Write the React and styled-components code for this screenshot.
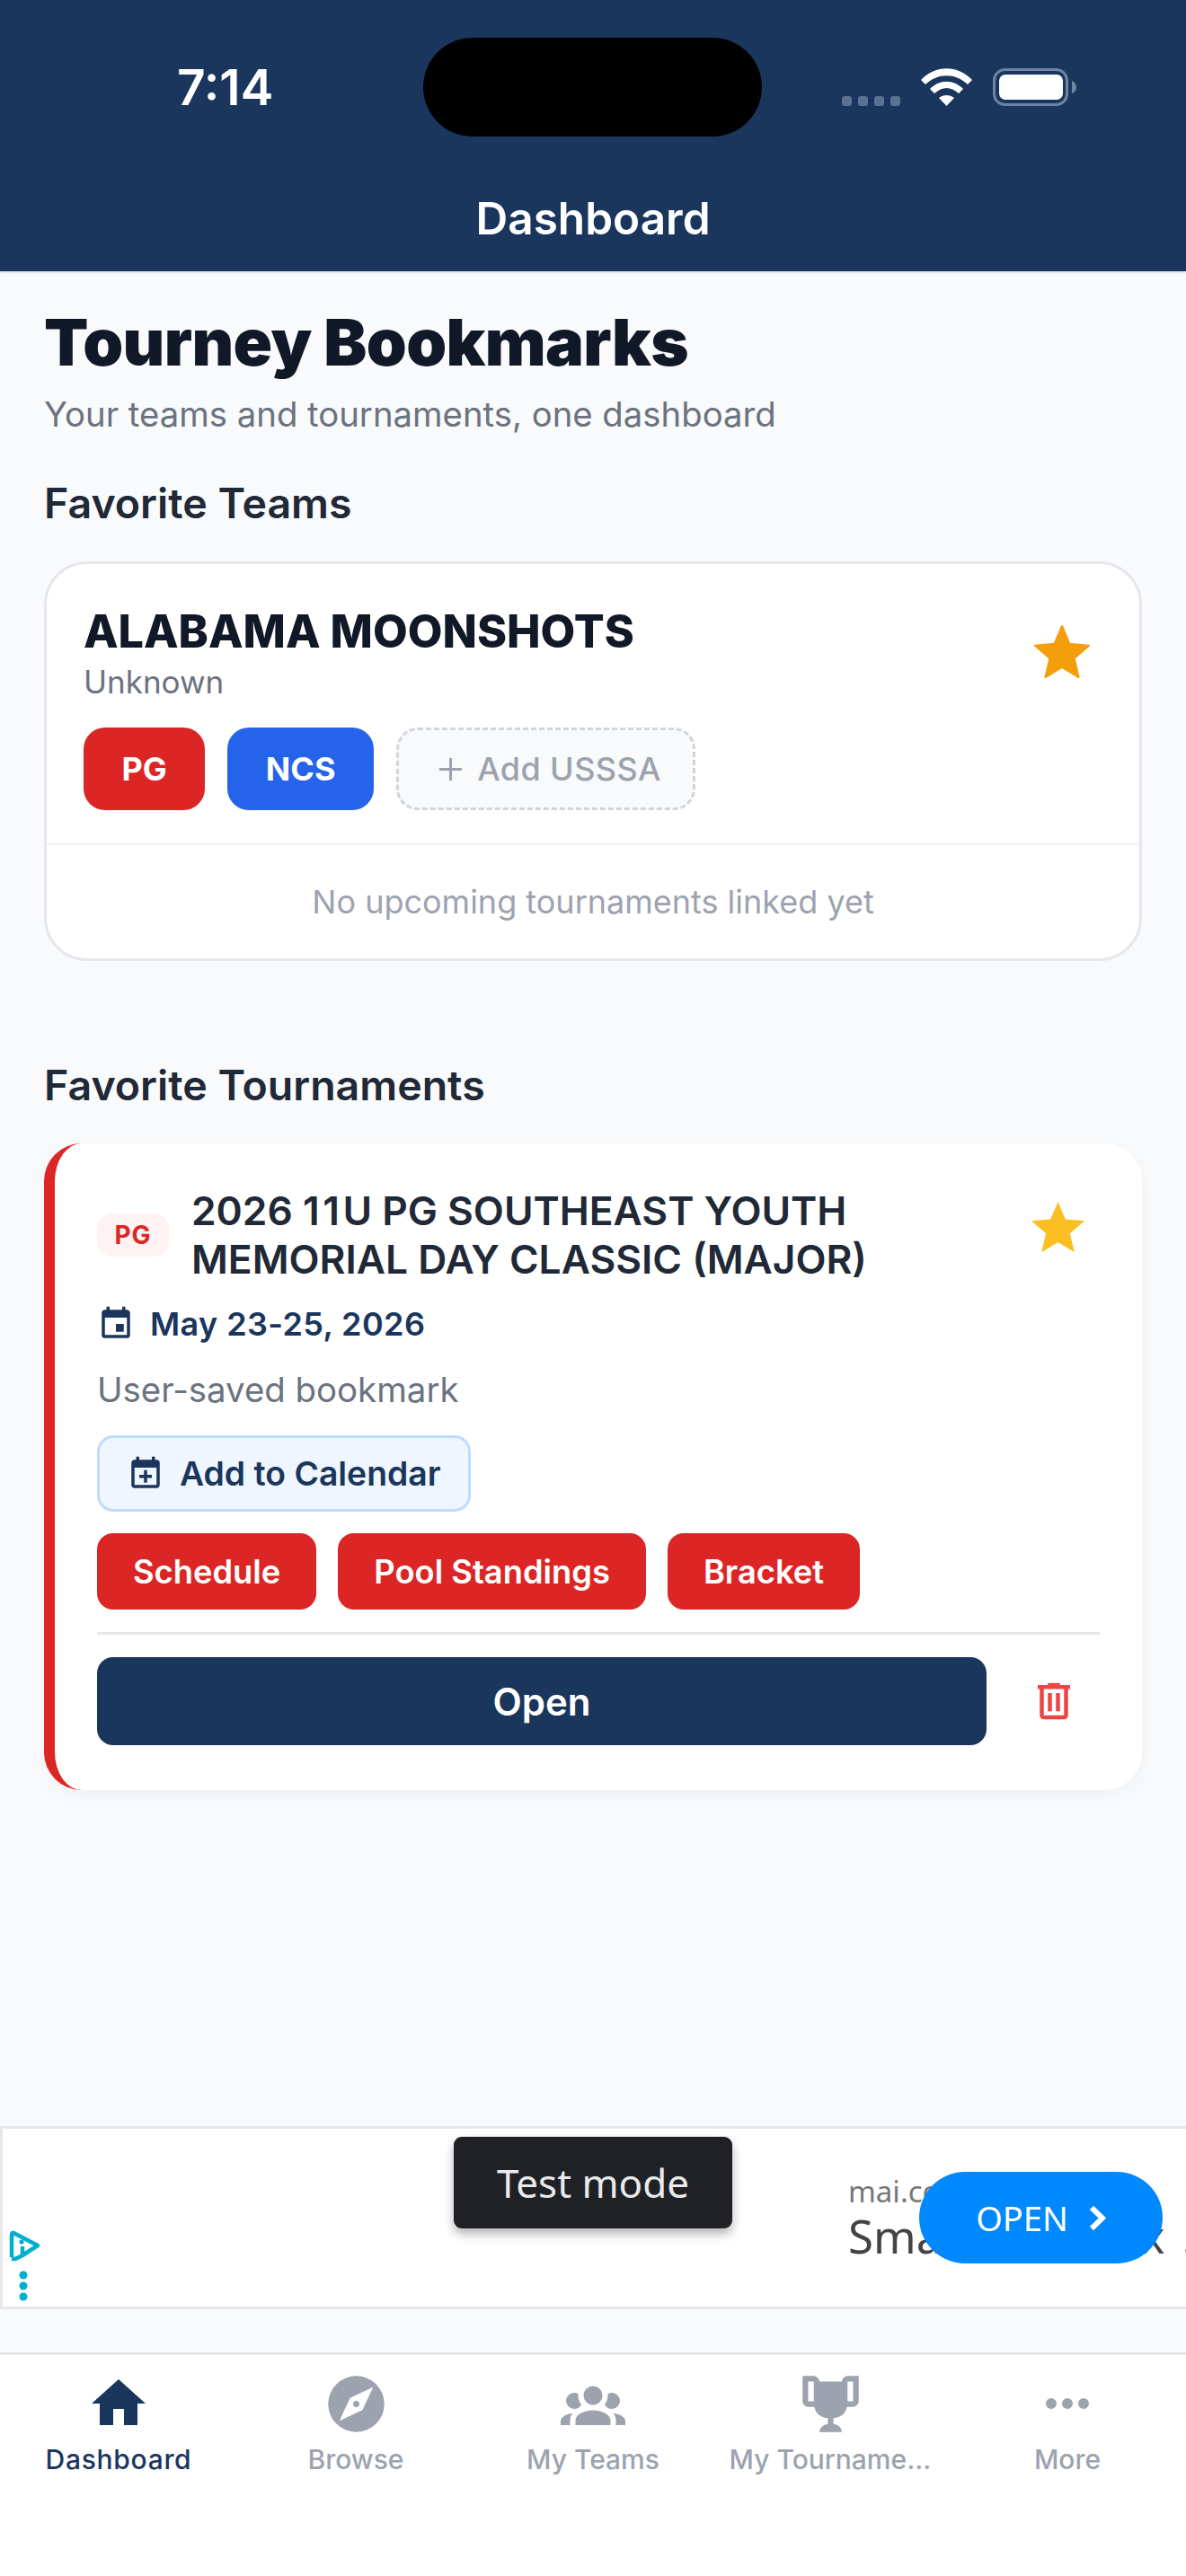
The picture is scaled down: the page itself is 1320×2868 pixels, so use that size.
import React from 'react';
import styled, { createGlobalStyle } from 'styled-components';

const GlobalStyle = createGlobalStyle`
  html, body { margin: 0; padding: 0; background: #f9fafb; }
  * { box-sizing: border-box; }
  body { font-family: 'Inter', 'Liberation Sans', sans-serif; }
`;

const Screen = styled.div`
  width: 1320px;
  height: 2868px;
  display: flex;
  flex-direction: column;
  background: #f9fafb;
  overflow: hidden;
`;

const Header = styled.header`
  height: 302px;
  flex: none;
  background: #1a365d;
  box-shadow: 0 1px 3px rgba(0, 0, 0, 0.2);
  display: flex;
  flex-direction: column;
  align-items: center;
  color: #fff;
`;

const StatusBar = styled.div`
  width: 100%;
  height: 110px;
  margin-top: 42px;
  display: flex;
  align-items: center;
`;

const Clock = styled.div`
  width: 471px;
  padding-left: 197px;
  font-size: 55px;
  font-weight: 600;
`;

const Island = styled.div`
  width: 377px;
  height: 110px;
  border-radius: 55px;
  background: #000;
`;

const StatusIcons = styled.div`
  margin-left: 89px;
  height: 42px;
  display: flex;
  align-items: flex-end;
  gap: 23px;
`;

const HeaderTitle = styled.div`
  margin-top: 61px;
  font-size: 49.5px;
  line-height: 60px;
  font-weight: 600;
`;

const Main = styled.main`
  flex: 1;
  padding: 35px 49px 0;
`;

const PageTitle = styled.h1`
  margin: 0;
  font-size: 72px;
  line-height: 88px;
  font-weight: 900;
  letter-spacing: -0.6px;
  color: #111827;
`;

const Subtitle = styled.p`
  margin: 9px 0 0;
  font-size: 38.3px;
  line-height: 54px;
  color: #6b7280;
`;

const SectionTitle = styled.h2`
  margin: ${(p) => p.$top}px 0 0;
  font-size: 46.5px;
  line-height: 60px;
  font-weight: 600;
  color: #1f2937;
`;

const TeamCard = styled.section`
  margin-top: 35px;
  height: 445px;
  background: #fff;
  border: 3px solid #e5e7eb;
  border-radius: 48px;
`;

const TeamTop = styled.div`
  height: 313px;
  padding: 45px 50px 0 41px;
  display: flex;
  justify-content: space-between;
  border-bottom: 3px solid #f3f4f6;
`;

const TeamName = styled.div`
  font-size: 50.2px;
  line-height: 60px;
  font-weight: 800;
  color: #111827;
`;

const TeamSub = styled.div`
  margin-top: 5px;
  font-size: 35px;
  line-height: 42px;
  color: #6b7280;
`;

const ChipRow = styled.div`
  margin-top: 30px;
  display: flex;
  gap: 25px;
`;

const Chip = styled.div`
  height: 92px;
  padding: 0 42.5px;
  border-radius: 24px;
  background: ${(p) => p.$bg};
  color: #fff;
  font-size: 36px;
  font-weight: 700;
  display: flex;
  align-items: center;
`;

const AddChip = styled.div`
  height: 92px;
  width: 333px;
  padding-left: 10px;
  border-radius: 24px;
  border: 3px dashed #d1d5db;
  background: #f9fafb;
  color: #9ca3af;
  font-size: 36px;
  font-weight: 500;
  letter-spacing: 0.4px;
  display: flex;
  align-items: center;
  justify-content: center;
  gap: 17px;
`;

const TeamStar = styled.div`
  color: #f59e0b;
  margin-top: 18px;
  display: flex;
`;

const EmptyNote = styled.div`
  height: 126px;
  display: flex;
  align-items: center;
  justify-content: center;
  font-size: 36px;
  color: #9ca3af;
`;

const TournamentCard = styled.section`
  margin-top: 35px;
  height: 720px;
  background: #fff;
  border-left: 12px solid #dc2626;
  border-radius: 42px;
  box-shadow: 0 6px 24px rgba(0, 0, 0, 0.04);
  padding: 48px 47px 0 47px;
`;

const TitleRow = styled.div`
  display: flex;
  align-items: center;
`;

const SourceTag = styled.div`
  width: 80px;
  height: 48px;
  border-radius: 18px;
  background: #fef2f2;
  color: #dc2626;
  font-size: 28px;
  font-weight: 700;
  letter-spacing: 1px;
  display: flex;
  align-items: center;
  justify-content: center;
  flex: none;
`;

const TournamentTitle = styled.div`
  margin-left: 25px;
  flex: 1;
  font-size: 44.3px;
  line-height: 54px;
  font-weight: 600;
  color: #1f2937;
`;

// the 1s sit wider in the reference's digits
const WideDigits = styled.span`
  letter-spacing: 3.5px;
`;

const TournamentStar = styled.div`
  color: #fbbf24;
  display: flex;
  margin: -16px 11px 0 0;
`;

const DateRow = styled.div`
  margin-top: 23px;
  display: flex;
  align-items: center;
  gap: 17px;
  font-size: 36px;
  font-weight: 600;
  letter-spacing: 0.4px;
  color: #1a365d;
`;

const Note = styled.div`
  margin-top: 28px;
  font-size: 38.4px;
  line-height: 46px;
  color: #6b7280;
`;

const CalendarButton = styled.div`
  margin-top: 28px;
  width: 416px;
  height: 85px;
  border: 3px solid #bfdbfe;
  border-radius: 18px;
  background: #eff6ff;
  color: #1a365d;
  font-size: 37.3px;
  font-weight: 600;
  display: flex;
  align-items: center;
  padding-left: 30px;
  gap: 17px;
`;

const LinkRow = styled.div`
  margin-top: 24px;
  display: flex;
  gap: 24px;
`;

const LinkButton = styled.div`
  height: 85px;
  padding: 0 40px;
  border-radius: 18px;
  background: #dc2626;
  color: #fff;
  font-size: 36.3px;
  font-weight: 600;
  display: flex;
  align-items: center;
`;

const ActionRow = styled.div`
  margin-top: 25px;
  padding-top: 25px;
  border-top: 3px solid #e5e7eb;
  display: flex;
  align-items: center;
  justify-content: space-between;
`;

const OpenButton = styled.div`
  width: 990px;
  height: 98px;
  border-radius: 18px;
  background: #1a365d;
  color: #fff;
  font-size: 42px;
  font-weight: 600;
  display: flex;
  align-items: center;
  justify-content: center;
`;

const TrashButton = styled.div`
  color: #ef4444;
  display: flex;
  margin-right: 24px;
`;

const AdBanner = styled.aside`
  height: 204px;
  flex: none;
  border: 3px solid #e5e7eb;
  border-right: none;
  background: #fff;
  position: relative;
  overflow: hidden;
  font-family: 'Noto Sans', sans-serif;
`;

const AdIcon = styled.div`
  position: absolute;
  left: 5px;
  top: 113px;
  display: flex;
`;

const ToastBadge = styled.div`
  position: absolute;
  left: 502px;
  top: 9px;
  width: 310px;
  height: 102px;
  border-radius: 9px;
  background: #202124;
  box-shadow: 0 6px 12px rgba(0, 0, 0, 0.3);
  color: #e8eaed;
  font-size: 44px;
  display: flex;
  align-items: center;
  justify-content: center;
`;

const AdDomain = styled.div`
  position: absolute;
  left: 941px;
  top: 47px;
  font-size: 33px;
  color: #777;
`;

const AdHeadline = styled.div`
  position: absolute;
  left: 941px;
  top: 84px;
  font-size: 51px;
  word-spacing: 6px;
  color: #444;
  white-space: nowrap;
`;

const AdOpen = styled.div`
  position: absolute;
  left: 1020px;
  top: 48px;
  width: 271px;
  height: 102px;
  border-radius: 51px;
  background: #0088ff;
  color: #fff;
  font-size: 38px;
  display: flex;
  align-items: center;
  justify-content: center;
  gap: 24px;
`;

const Spacer = styled.div`
  height: 48px;
  flex: none;
`;

const TabBar = styled.nav`
  height: 249px;
  flex: none;
  background: #fff;
  border-top: 3px solid #e5e7eb;
  display: flex;
  padding-top: 18px;
`;

const Tab = styled.div`
  flex: 1;
  min-width: 0;
  display: flex;
  flex-direction: column;
  align-items: center;
  color: ${(p) => (p.$active ? '#1a365d' : '#9ca3af')};
`;

const TabIcon = styled.div`
  height: 72px;
  display: flex;
  align-items: center;
  justify-content: center;
`;

const TabLabel = styled.div`
  margin-top: 6px;
  font-size: 30px;
  line-height: 40px;
  font-weight: 500;
  letter-spacing: ${(p) => (p.$active ? '0.7px' : '0')};
  white-space: nowrap;
`;

// material community icon paths, same set the app uses
const icons = {
  home: 'M10,20V14H14V20H19V12H22L12,3L2,12H5V20H10Z',
  compass: 'M14.19,14.19L6,18L9.81,9.81L18,6M12,2A10,10 0 0,0 2,12A10,10 0 0,0 12,22A10,10 0 0,0 22,12A10,10 0 0,0 12,2M12,10.9A1.1,1.1 0 0,0 10.9,12A1.1,1.1 0 0,0 12,13.1A1.1,1.1 0 0,0 13.1,12A1.1,1.1 0 0,0 12,10.9Z',
  group: 'M12,5.5A3.5,3.5 0 0,1 15.5,9A3.5,3.5 0 0,1 12,12.5A3.5,3.5 0 0,1 8.5,9A3.5,3.5 0 0,1 12,5.5M5,8C5.56,8 6.08,8.15 6.53,8.42C6.38,9.85 6.8,11.27 7.66,12.38C7.16,13.34 6.16,14 5,14A3,3 0 0,1 2,11A3,3 0 0,1 5,8M19,8A3,3 0 0,1 22,11A3,3 0 0,1 19,14C17.84,14 16.84,13.34 16.34,12.38C17.2,11.27 17.62,9.85 17.47,8.42C17.92,8.15 18.44,8 19,8M5.5,18.25C5.5,16.18 8.41,14.5 12,14.5C15.59,14.5 18.5,16.18 18.5,18.25V20H5.5V18.25M0,20V18.5C0,17.11 1.89,15.94 4.45,15.6C3.86,16.28 3.5,17.22 3.5,18.25V20H0M24,20H20.5V18.25C20.5,17.22 20.14,16.28 19.55,15.6C22.11,15.94 24,17.11 24,18.5V20Z',
  trophy: 'M20.2,2H19.5H18C17.1,2 16,3 16,4H8C8,3 6.9,2 6,2H4.5H3.8H2V11C2,12 3,13 4,13H6.2C6.6,15 7.9,16.7 11,17V19.08C8,19.54 8,22 8,22H16C16,22 16,19.54 13,19.08V17C16.1,16.7 17.4,15 17.8,13H20C21,13 22,12 22,11V2H20.2M4,11V4H6V6V11C5.1,11 4.3,11 4,11M20,11C19.7,11 18.9,11 18,11V6V4H20V11Z',
  dots: 'M16,12A2,2 0 0,1 18,10A2,2 0 0,1 20,12A2,2 0 0,1 18,14A2,2 0 0,1 16,12M10,12A2,2 0 0,1 12,10A2,2 0 0,1 14,12A2,2 0 0,1 12,14A2,2 0 0,1 10,12M4,12A2,2 0 0,1 6,10A2,2 0 0,1 8,12A2,2 0 0,1 6,14A2,2 0 0,1 4,12Z',
  star: 'M12,17.27L18.18,21L16.54,13.97L22,9.24L14.81,8.62L12,2L9.19,8.62L2,9.24L7.45,13.97L5.82,21L12,17.27Z',
  calendar: 'M19,19H5V8H19M16,1V3H8V1H6V3H5C3.89,3 3,3.89 3,5V19A2,2 0 0,0 5,21H19A2,2 0 0,0 21,19V5C21,3.89 20.1,3 19,3H18V1M17,12H12V17H17V12Z',
  calendarPlus: 'M19,19V8H5V19H19M16,1H18V3H19A2,2 0 0,1 21,5V19C21,20.11 20.11,21 19,21H5C3.89,21 3,20.1 3,19V5C3,3.89 3.89,3 5,3H6V1H8V3H16V1M11,9.5H13V12.5H16V14.5H13V17.5H11V14.5H8V12.5H11V9.5Z',
  trash: 'M9,3V4H4V6H5V19A2,2 0 0,0 7,21H17A2,2 0 0,0 19,19V6H20V4H15V3H9M7,6H17V19H7V6M9,8V17H11V8H9M13,8V17H15V8H13Z',
};

const Icon = ({ name, size, rounded }) => (
  <svg
    width={size}
    height={size}
    viewBox="0 0 24 24"
    fill="currentColor"
    stroke={rounded ? 'currentColor' : 'none'}
    strokeWidth={rounded ? 0.7 : 0}
    strokeLinejoin="round"
  >
    <path d={icons[name]} />
  </svg>
);

const SignalIcon = () => (
  <svg width="65" height="11" viewBox="0 0 65 11" fill="#5a7191">
    <rect x="0" width="11" height="11" rx="3" />
    <rect x="18" width="11" height="11" rx="3" />
    <rect x="36" width="11" height="11" rx="3" />
    <rect x="54" width="11" height="11" rx="3" />
  </svg>
);

const WifiIcon = () => (
  <svg width="57" height="42" viewBox="0 0 57 42" fill="#fff">
    <path d="M0 13 C16 -4 41 -4 57 13 L52 18 C38 5 19 5 5 18 Z" />
    <path d="M10 23 C21 12 36 12 47 23 L42 28 C33 20 24 20 15 28 Z" />
    <path d="M20 33 C25 29 32 29 37 33 L28.5 42 Z" />
  </svg>
);

const BatteryIcon = () => (
  <svg width="93" height="42" viewBox="0 0 93 42">
    <rect x="1.5" y="1.5" width="81" height="39" rx="12" fill="none" stroke="#6f84a3" strokeWidth="3" />
    <rect x="7" y="7" width="71" height="28" rx="7" fill="#fff" />
    <path d="M88 14 C91 15 93 18 93 21 C93 24 91 27 88 28 Z" fill="#6f84a3" />
  </svg>
);

const PlusIcon = () => (
  <svg width="25" height="25" viewBox="0 0 25 25" stroke="currentColor" strokeWidth="3">
    <path d="M12.5 0V25M0 12.5H25" />
  </svg>
);

const ChevronIcon = () => (
  <svg width="18" height="27" viewBox="0 0 18 27" fill="none" stroke="#fff" strokeWidth="6">
    <path d="M2 2 L14 13.5 L2 25" />
  </svg>
);

const AdChoicesIcon = () => (
  <svg width="38" height="82" viewBox="0 0 38 82" fill="none">
    <path d="M5 30 V5 Q5 2 8 3.5 L34 17 L17 28" stroke="#00aecd" strokeWidth="4.5" strokeLinejoin="round" />
    <path d="M5 32 L9 32 L17 28 V18" stroke="#00aecd" strokeWidth="4.5" />
    <circle cx="16" cy="13" r="2.6" fill="#00aecd" />
    <circle cx="18" cy="50" r="4.5" fill="#00aecd" />
    <circle cx="18" cy="62" r="4.5" fill="#00aecd" />
    <circle cx="18" cy="74" r="4.5" fill="#00aecd" />
  </svg>
);

const tabs = [
  { label: 'Dashboard', icon: 'home', size: 72, active: true },
  { label: 'Browse', icon: 'compass', size: 75 },
  { label: 'My Teams', icon: 'group', size: 72 },
  { label: 'My Tourname...', icon: 'trophy', size: 75 },
  { label: 'More', icon: 'dots', size: 72 },
];

const App = () => {
  return (
    <Screen>
      <GlobalStyle />
      <Header>
        <StatusBar>
          <Clock>7:14</Clock>
          <Island />
          <StatusIcons>
            <SignalIcon />
            <WifiIcon />
            <BatteryIcon />
          </StatusIcons>
        </StatusBar>
        <HeaderTitle>Dashboard</HeaderTitle>
      </Header>
      <Main>
        <PageTitle>Tourney Bookmarks</PageTitle>
        <Subtitle>Your teams and tournaments, one dashboard</Subtitle>
        <SectionTitle $top={42}>Favorite Teams</SectionTitle>
        <TeamCard>
          <TeamTop>
            <div>
              <TeamName>ALABAMA MOONSHOTS</TeamName>
              <TeamSub>Unknown</TeamSub>
              <ChipRow>
                <Chip $bg="#dc2626">PG</Chip>
                <Chip $bg="#2563eb">NCS</Chip>
                <AddChip><PlusIcon />Add USSSA</AddChip>
              </ChipRow>
            </div>
            <TeamStar><Icon name="star" size={72} rounded /></TeamStar>
          </TeamTop>
          <EmptyNote>No upcoming tournaments linked yet</EmptyNote>
        </TeamCard>
        <SectionTitle $top={108}>Favorite Tournaments</SectionTitle>
        <TournamentCard>
          <TitleRow>
            <SourceTag>PG</SourceTag>
            <TournamentTitle>2026 <WideDigits>11</WideDigits>U PG SOUTHEAST YOUTH<br />MEMORIAL DAY CLASSIC (MAJOR)</TournamentTitle>
            <TournamentStar><Icon name="star" size={71} /></TournamentStar>
          </TitleRow>
          <DateRow><Icon name="calendar" size={42} />May 23-25, 2026</DateRow>
          <Note>User-saved bookmark</Note>
          <CalendarButton><Icon name="calendarPlus" size={42} />Add to Calendar</CalendarButton>
          <LinkRow>
            <LinkButton>Schedule</LinkButton>
            <LinkButton>Pool Standings</LinkButton>
            <LinkButton>Bracket</LinkButton>
          </LinkRow>
          <ActionRow>
            <OpenButton>Open</OpenButton>
            <TrashButton><Icon name="trash" size={54} /></TrashButton>
          </ActionRow>
        </TournamentCard>
      </Main>
      <AdBanner>
        <AdIcon><AdChoicesIcon /></AdIcon>
        <AdDomain>mai.com</AdDomain>
        <AdHeadline>Smart Mailbox .</AdHeadline>
        <ToastBadge>Test mode</ToastBadge>
        <AdOpen>OPEN<ChevronIcon /></AdOpen>
      </AdBanner>
      <Spacer />
      <TabBar>
        {tabs.map((tab) => (
          <Tab key={tab.label} $active={tab.active}>
            <TabIcon><Icon name={tab.icon} size={tab.size} /></TabIcon>
            <TabLabel $active={tab.active}>{tab.label}</TabLabel>
          </Tab>
        ))}
      </TabBar>
    </Screen>
  );
};

export default App;
